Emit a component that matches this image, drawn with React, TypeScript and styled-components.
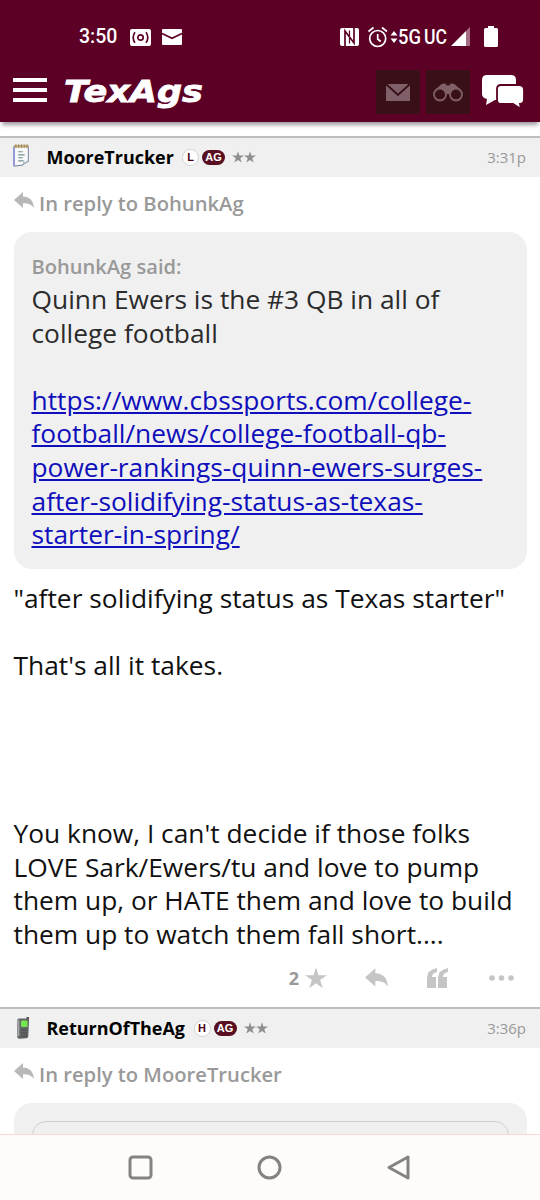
import React from "react";
import styled, { createGlobalStyle } from "styled-components";

const Global = createGlobalStyle`
  * { box-sizing: border-box; }
  html, body { margin: 0; background: #fff; }
  body { font-family: "Open Sans", "Noto Sans", sans-serif; color: #111; }
  svg { display: block; flex: none; overflow: visible; }
`;

const Screen = styled.div`
  width: 540px;
  height: 1200px;
  display: flex;
  flex-direction: column;
  overflow: hidden;
  background: #fff;
`;

const Header = styled.header`
  flex: none;
  height: 122px;
  background: #5c0025;
  box-shadow: 0 5px 4px -2px rgba(0, 0, 0, 0.38);
`;

const StatusBar = styled.div`
  height: 62px;
  padding: 12px 42px 0 79px;
  display: flex;
  align-items: center;
  color: #fff;
  font: 500 19.5px/24px Roboto, sans-serif;
`;

const Clock = styled.span`
  width: 51px;
  white-space: nowrap;
`;

const StatusGroup = styled.div<{ $push?: boolean; $gap: number }>`
  display: flex;
  align-items: center;
  gap: ${(p) => p.$gap}px;
  margin-left: ${(p) => (p.$push ? "auto" : "0")};
`;

const NavRow = styled.div`
  height: 60px;
  padding: 0 15px 0 13px;
  display: flex;
  align-items: center;
`;

const MenuButton = styled.div`
  width: 34px;
  height: 24px;
  display: flex;
  flex-direction: column;
  justify-content: space-between;
  margin: 0 17px 4px 0;
`;

const MenuBar = styled.span`
  height: 4px;
  background: #fff;
`;

const HeaderActions = styled.div`
  margin-left: auto;
  display: flex;
  align-items: center;
`;

const DarkButton = styled.div<{ $gap: number }>`
  width: 44px;
  height: 44px;
  margin-right: ${(p) => p.$gap}px;
  border-radius: 2px;
  background: #391018;
  display: flex;
  align-items: center;
  justify-content: center;
`;

const Feed = styled.main`
  flex: 1;
  min-height: 0;
  overflow: hidden;
  padding-top: 14px;
`;

const PosterBar = styled.div`
  height: 41px;
  border-top: 2px solid #bdbdbd;
  background: #f0f0f0;
  display: flex;
  align-items: center;
  padding: 0 14px 1px 10px;
`;

const TopicIcon = styled.div<{ $lift: number }>`
  width: 36.5px;
  padding-bottom: ${(p) => p.$lift}px;
`;

const Username = styled.span<{ $width: number }>`
  width: ${(p) => p.$width}px;
  font-size: 17.95px;
  font-weight: 700;
  color: #000;
  white-space: nowrap;
`;

const Letter = styled.span`
  width: 17px;
  height: 17px;
  margin: 0 3px 0 8px;
  border: 1px solid #d2d2d2;
  border-radius: 50%;
  background: #fff;
  color: #500014;
  font: 700 11px/15px "Liberation Sans", sans-serif;
  text-align: center;
`;

const AgBadge = styled.span`
  width: 23px;
  height: 15px;
  margin-right: 7px;
  border-radius: 8px;
  background: #580f20;
  color: #fff;
  font: 700 11px/15px "Liberation Sans", sans-serif;
  text-align: center;
`;

const Time = styled.span`
  margin-left: auto;
  font-size: 15px;
  color: #999;
`;

const ReplyLine = styled.div`
  height: 55px;
  padding: 0 13px 4px 14px;
  display: flex;
  align-items: center;
  gap: 5px;
  color: #999;
  font-size: 20.2px;
  font-weight: 600;
  white-space: nowrap;
`;

const ReplyMark = styled.span`
  margin-top: -5px;
`;

const Quote = styled.blockquote`
  margin: 0 13.5px;
  padding: 18px 18px 17px;
  border-radius: 18px;
  background: #f0f0f0;
  color: #2b2b2b;
`;

const Said = styled.div`
  height: 33px;
  line-height: 33px;
  font-size: 20.1px;
  font-weight: 600;
  color: #999;
`;

const Line = styled.div`
  height: 33.6px;
  line-height: 33.6px;
  font-size: 26.33px;
  white-space: nowrap;
`;

const Link = styled.a`
  color: #0f0fbb;
  text-decoration: underline;
`;

const PostBody = styled.div`
  padding: 13px 13.5px 0;
`;

const Actions = styled.div`
  height: 56px;
  padding: 0 26px 3px 0;
  display: flex;
  align-items: center;
  justify-content: flex-end;
  color: #999;
  font-size: 18px;
  font-weight: 700;
`;

const ActionIcon = styled.span<{ $gap: number }>`
  margin-left: ${(p) => p.$gap}px;
`;

const NestedQuote = styled.div`
  height: 60px;
  border: 1.5px solid #d0d0d0;
  border-radius: 14px;
`;

const SystemNav = styled.nav`
  flex: none;
  height: 66px;
  border-top: 1px solid #f6d9d6;
  background: #fffbfa;
  display: flex;
  align-items: center;
  justify-content: center;
  gap: 104px;
  padding: 0 2px 1px 0;
`;

const ReplyArrow = ({ w = 20, h = 17, color = "#b8b8b8" }) => (
  <svg width={w} height={h} viewBox="0 0 20 17" fill={color}>
    <path d="M0 8 9 0v4.400c6.500.200 10.200 3.700 11 11.300-3-3.600-6.200-4.700-11-4.500V16z" />
  </svg>
);

const Star = ({ size, color }: { size: number; color: string }) => (
  <svg width={size} height={size} viewBox="0 0 22 22" fill={color}>
    <path d="m11 .5 2.500 7.800H22l-6.900 4.800 2.700 8.100L11 16.300l-6.800 4.900 2.700-8.100L0 8.300h8.500z" />
  </svg>
);

const Notepad = () => (
  <svg width="21" height="24" viewBox="0 0 22 26">
    <path d="M4 3.500h15.500V20l-4.500 2-2 2-9 1z" fill="#f8fafa" stroke="#8590a8" strokeWidth="1.200" />
    <path d="M4 4v20.500" stroke="#8a93dc" strokeWidth="1.800" />
    <path d="M14 24v-3.500l5.500-.5z" fill="#a9b3c4" />
    <path d="M4 3.500h15.500" stroke="#c9b184" strokeWidth="3" />
    <path d="M6 1.500v4m3-4v4m3-4v4m3-4v4m3-4v4" stroke="#8d754e" strokeWidth=".9" />
    <path d="M8.500 9.500h5m-5 3.300h7m-7 3.200h5m-5 3.300h6" stroke="#72908f" strokeWidth="1.300" />
  </svg>
);

const Phone = () => (
  <svg width="26" height="24" viewBox="0 0 26 24">
    <path d="M16.500 1h2.500v5h-2.500z" fill="#555" />
    <path d="M9 2.500h8q2 0 2 2l-.7 16q0 1.500-2 1.700l-6 .5q-3 0-3-2V4.500q0-2 1.700-2z" fill="#626565" />
    <path d="M8.500 4v16" stroke="#a3a6a4" strokeWidth="1.800" />
    <rect x="11" y="4.500" width="6.500" height="6.500" rx="1" fill="#75e650" />
    <path d="M11 14h6.500m-6.500 3h6m-6 3h6" stroke="#464a49" strokeWidth="1.200" />
  </svg>
);

const Poster = ({ icon, lift, name, width, letter, time }: {
  icon: React.ReactNode; lift: number; name: string; width: number; letter: string; time: string;
}) => (
  <PosterBar>
    <TopicIcon $lift={lift}>{icon}</TopicIcon>
    <Username $width={width}>{name}</Username>
    <Letter>{letter}</Letter>
    <AgBadge>AG</AgBadge>
    <Star size={12} color="#8f8f8f" />
    <Star size={12} color="#8f8f8f" />
    <Time>{time}</Time>
  </PosterBar>
);

const linkLines = [
  "https://www.cbssports.com/college-",
  "football/news/college-football-qb-",
  "power-rankings-quinn-ewers-surges-",
  "after-solidifying-status-as-texas-",
  "starter-in-spring/",
];

const postLines = [
  "\"after solidifying status as Texas starter\"", "", "That's all it takes.", "", "", "", "",
  "You know, I can't decide if those folks",
  "LOVE Sark/Ewers/tu and love to pump",
  "them up, or HATE them and love to build",
  "them up to watch them fall short....",
];

export default function App() {
  return (
    <Screen>
      <Global />
      <Header>
        <StatusBar>
          <Clock>3:50</Clock>
          <StatusGroup $gap={11}>
            <svg width="21" height="17" viewBox="0 0 21 17">
              <rect width="21" height="17" rx="2" fill="#fff" />
              <g fill="none" stroke="#5c0025" strokeWidth="1.700">
                <circle cx="10.500" cy="8.500" r="2.700" />
                <path d="M5 3.200c-2.400 3-2.400 7.600 0 10.600M16 3.200c2.400 3 2.400 7.600 0 10.600" />
              </g>
            </svg>
            <svg width="20" height="16" viewBox="0 0 20 16">
              <rect width="20" height="16" rx="1" fill="#fff" />
              <path d="m0 4.500 10 4.700 10-4.700" fill="none" stroke="#5c0025" strokeWidth="1.700" />
            </svg>
          </StatusGroup>
          <StatusGroup $push $gap={0}>
            <svg width="28" height="20" viewBox="0 0 28 20">
              <rect y="1" width="19" height="18" rx="2" fill="#fff" />
              <path d="M5 19V4l9 12V1" fill="none" stroke="#5c0025" strokeWidth="1.700" />
              <path d="M9.500 9V3.500M9.500 11v5.500" stroke="#5c0025" strokeWidth="1.200" />
            </svg>
            <svg width="22" height="22" viewBox="0 0 22 22" fill="none" stroke="#fff" strokeWidth="1.700">
              <circle cx="9.700" cy="12.500" r="8" />
              <path d="M9.700 8v5l3 2.500M.5 5.500l5-4M14 1.500l5 4" />
            </svg>
            <svg width="8" height="12" viewBox="0 0 8 12" fill="#fff">
              <path d="m4 0 3.500 4.500h-7zM4 12 .5 7.500h7z" />
            </svg>
            <svg width="53" height="32" viewBox="0 0 53 32" fill="#fff" fontFamily="Roboto" fontSize="20" fontWeight="500">
              <text x="0" y="23" textLength="23" lengthAdjust="spacingAndGlyphs">5G</text>
              <text x="26" y="23" textLength="23" lengthAdjust="spacingAndGlyphs">UC</text>
            </svg>
            <svg width="33" height="20" viewBox="0 0 33 20">
              <path d="M15 4v15H0z" fill="#fff" />
              <path d="M15 4 19 0v19h-4z" fill="#a66c83" />
            </svg>
            <svg width="14" height="22" viewBox="0 0 14 22" fill="#fff">
              <path d="M4 0h6v2h2.500q1.500 0 1.500 1.500v16q0 1.500-1.500 1.500h-11Q0 21 0 19.500v-16Q0 2 1.500 2H4z" />
            </svg>
          </StatusGroup>
        </StatusBar>
        <NavRow>
          <MenuButton><MenuBar /><MenuBar /><MenuBar /></MenuButton>
          <svg width="144" height="44" viewBox="0 0 144 44">
            <text x="0" y="31.500" textLength="139" lengthAdjust="spacingAndGlyphs" fill="#fff" stroke="#fff" strokeWidth=".8" fontFamily="DejaVu Sans" fontSize="31" fontWeight="700" fontStyle="italic">TexAgs</text>
          </svg>
          <HeaderActions>
            <DarkButton $gap={6}>
              <svg width="24" height="17" viewBox="0 0 24 17">
                <path d="M0 0h24v17H0z" fill="#806068" />
                <path d="m0 0 12 11L24 0" fill="none" stroke="#391018" strokeWidth="2" />
              </svg>
            </DarkButton>
            <DarkButton $gap={11}>
              <svg width="30" height="19" viewBox="0 0 30 19" fill="none" stroke="#806068" strokeWidth="1.800">
                <path d="M3 6 8 1.500Q10 0 12 .5l2 2h2l2-2q2-.5 4 1L27 6l-7 0-4 5h-2l-4-5z" fill="#806068" stroke="none" />
                <circle cx="7" cy="11.500" r="6" fill="#391018" />
                <circle cx="23" cy="11.500" r="6" fill="#391018" />
              </svg>
            </DarkButton>
            <svg width="44" height="36" viewBox="0 0 44 36" fill="#fff">
              <path d="M6 1h24q5 0 5 5v15q0 5-5 5H14l-9 5 1-6q-5-1-5-5V6q0-5 5-5z" />
              <path d="M20 11h18q5 0 5 5v9q0 5-4 5l1 5-8-5H20q-4 0-4-4V15q0-4 4-4z" stroke="#5c0025" strokeWidth="1.800" />
            </svg>
          </HeaderActions>
        </NavRow>
      </Header>
      <Feed>
        <Poster icon={<Notepad />} lift={5} name="MooreTrucker" width={127.5} letter="L" time="3:31p" />
        <ReplyLine><ReplyMark><ReplyArrow /></ReplyMark>In reply to BohunkAg</ReplyLine>
        <Quote>
          <Said>BohunkAg said:</Said>
          <Line>Quinn Ewers is the #3 QB in all of</Line>
          <Line>college football</Line>
          <Line />
          {linkLines.map((text) => <Line key={text}><Link>{text}</Link></Line>)}
        </Quote>
        <PostBody>
          {postLines.map((text, i) => <Line key={i}>{text}</Line>)}
        </PostBody>
        <Actions>
          2
          <ActionIcon $gap={6}><Star size={22} color="#c5c5c5" /></ActionIcon>
          <ActionIcon $gap={38}><ReplyArrow w={23} h={20} color="#c5c5c5" /></ActionIcon>
          <ActionIcon $gap={39}>
            <svg width="22" height="20" viewBox="0 0 22 20" fill="#c5c5c5">
              <path d="M10 0v4Q5 5 5 9h4v11H0V10Q0 2 10 0ZM21 0v4q-5 1-5 5h4v11h-9V10q0-8 10-10Z" />
            </svg>
          </ActionIcon>
          <ActionIcon $gap={40}>
            <svg width="25" height="6" viewBox="0 0 25 6" fill="#c5c5c5">
              <circle cx="3" cy="3" r="2.800" /><circle cx="12.500" cy="3" r="2.800" /><circle cx="22" cy="3" r="2.800" />
            </svg>
          </ActionIcon>
        </Actions>
        <Poster icon={<Phone />} lift={1} name="ReturnOfTheAg" width={139} letter="H" time="3:36p" />
        <ReplyLine><ReplyMark><ReplyArrow /></ReplyMark>In reply to MooreTrucker</ReplyLine>
        <Quote><NestedQuote /></Quote>
      </Feed>
      <SystemNav>
        <svg width="25" height="25" viewBox="0 0 25 25" fill="none" stroke="#858282" strokeWidth="3">
          <rect x="2" y="2" width="21" height="21" rx="3" />
        </svg>
        <svg width="25" height="25" viewBox="0 0 25 25" fill="none" stroke="#858282" strokeWidth="3">
          <circle cx="12.500" cy="12.500" r="10.500" />
        </svg>
        <svg width="25" height="25" viewBox="0 0 25 25" fill="none" stroke="#858282" strokeWidth="3" strokeLinejoin="round">
          <path d="M22 2v21L3 12.500z" />
        </svg>
      </SystemNav>
    </Screen>
  );
}
